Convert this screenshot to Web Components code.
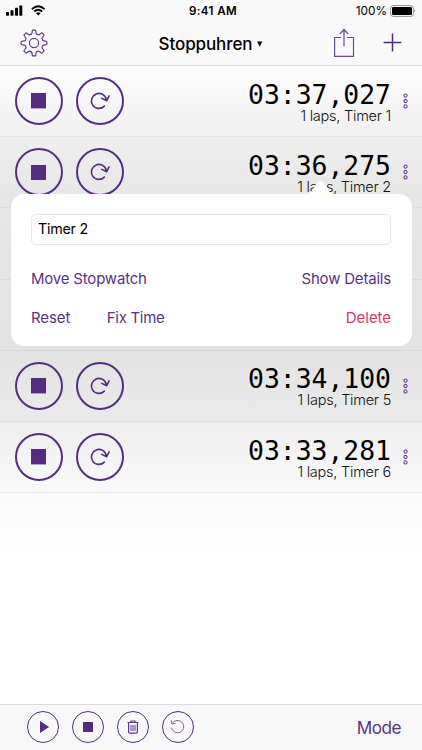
<!DOCTYPE html>
<html lang="de">
<head>
<meta charset="utf-8">
<title>Stoppuhren</title>
<style>
body{margin:0;background:#fff;font-family:Inter,"Liberation Sans",sans-serif;color:#000}
</style>
</head>
<body>
<stopwatch-app></stopwatch-app>
<script>
const define = (name, html, setup) => customElements.define(name, class extends HTMLElement {
  constructor() {
    super();
    this.attachShadow({mode: 'open'});
  }
  connectedCallback() {
    this.shadowRoot.innerHTML = html;
    if (setup) setup(this, this.shadowRoot);
  }
});

const REDO = '<svg width="22" height="20" viewBox="0 0 22 20" fill="none" stroke="#542c80" stroke-width="1.6" stroke-linecap="round" stroke-linejoin="round"><path d="M15.3 15.1A7.5 7.5 0 1 1 17.3 8.8M12.8 7.4L17.7 9.7L20.1 4.9"/></svg>';
const STOP = '<svg width="15.4" height="15.4" viewBox="0 0 15 15"><path fill="#562b82" d="M0 0h15v15H0z"/></svg>';

define('round-button', `
<style>
:host{display:flex;box-sizing:border-box;width:var(--size,48px);height:var(--size,48px);border:var(--ring,2px) solid #552e81;border-radius:50%;align-items:center;justify-content:center;flex:none}
::slotted(svg){display:block}
</style><slot></slot>`);

define('status-bar', `
<style>
:host{display:grid;grid-template-columns:1fr auto 1fr;align-items:center;height:21px;padding:0 6px;font-size:11.8px}
.l{display:flex;gap:8px;align-items:center}
.r{display:flex;gap:3px;align-items:center;justify-content:flex-end}
.t{font-weight:600;font-size:11.6px;letter-spacing:.4px;padding-left:4px;padding-top:1px}
svg{display:block}
</style>
<div class="l">
<svg width="17" height="11" viewBox="0 0 17 11"><rect y="7" width="3" height="3.7" rx=".7"/><rect x="4.5" y="5.2" width="3" height="5.5" rx=".7"/><rect x="9" y="2.8" width="3" height="7.9" rx=".7"/><rect x="13.3" y=".4" width="3" height="10.3" rx=".7"/></svg>
<svg width="15" height="11" viewBox="0 0 15 11" fill="none" stroke="#000" stroke-width="1.9"><path d="M.9 4.1Q7.2-1.7 13.6 4.1M3.2 6.5Q7.2 2.9 11.3 6.5"/><path d="M7.2 10.6L4.9 8.3Q7.2 6.2 9.6 8.3Z" fill="#000" stroke="none"/></svg>
</div>
<span class="t">9:41 AM</span>
<div class="r"><span>100%</span>
<svg width="26" height="12" viewBox="0 0 26 12"><rect x=".6" y=".6" width="22.8" height="10.8" rx="2.6" fill="none" stroke="#929292"/><rect x="2" y="2" width="20" height="8" rx="1.3"/><path d="M24.4 4Q26.1 5.9 24.4 8z" fill="#929292"/></svg></div>`);

define('nav-bar', `
<style>
:host{display:grid;grid-template-columns:1fr auto 1fr;align-items:center;height:44px;padding:0 20px 0 20px}
h1{margin:0;font-size:17px;font-weight:500;display:flex;align-items:center;gap:5px;letter-spacing:-.1px;line-height:22px;padding-top:1px}
.r{display:flex;justify-content:flex-end;align-items:center;gap:28px}
.plus{margin-top:-2px}
svg{display:block}
</style>
<svg class="gear" width="28" height="28" viewBox="-14 -14 28 28" fill="none" stroke="#613a8c" stroke-width="1.15" stroke-linejoin="round"></svg>
<h1><span>Stoppuhren</span><svg width="6" height="6" viewBox="0 0 6 6"><path d="M.2.4h5.2L2.8 5.8z"/></svg></h1>
<div class="r">
<svg width="22" height="30" viewBox="0 0 22 30" fill="none" stroke="#6d4896" stroke-width="1.2"><path d="M8 9.5H1.6V28.4H20.5V9.5H14M11 18.2V1.8M6.7 6.1L11 1.5L15.3 6.1"/></svg>
<svg class="plus" width="19" height="19" viewBox="0 0 19 19" stroke="#552b80" stroke-width="1.5"><path d="M9.5.6V18.4M.6 9.5H18.4"/></svg>
</div>`, (host, root) => {
  let d = '';
  for (let i = 0; i < 8; i++) {
    const base = i * Math.PI / 4 - Math.PI / 2;
    for (const [a, r] of [[-.255, 9.2], [-.2, 10.4], [-.12, 12.9], [.12, 12.9], [.2, 10.4], [.255, 9.2]])
      d += (d ? 'L' : 'M') + (Math.cos(base + a) * r).toFixed(2) + ' ' + (Math.sin(base + a) * r).toFixed(2);
  }
  root.querySelector('.gear').innerHTML = '<path d="' + d + 'Z"/><circle r="4.6"/>';
});

const ROW_BOX = ':host{display:flex;box-sizing:border-box;height:71.2px;padding:0 14px 0 14.5px;align-items:center;border-bottom:1px solid var(--line,#e4e4e4);background:var(--fill)}';

define('covered-row', `<style>${ROW_BOX}</style>`);

define('timer-row', `
<style>
${ROW_BOX}
.b{display:flex;gap:13px}
.i{margin-left:auto;display:flex;flex-direction:column;align-items:flex-end;margin-right:12px}
.time{font-family:"DejaVu Sans Mono","Liberation Mono",monospace;font-size:26.4px;line-height:26px;white-space:pre;padding-top:3px}
.n{font-size:14.5px;line-height:17px;font-weight:300;color:#111;letter-spacing:-.24px;margin-top:-1px}
svg{display:block}
</style>
<div class="b"><round-button>${STOP}</round-button><round-button>${REDO}</round-button></div>
<div class="i"><div class="time"></div><div class="n"><slot></slot></div></div>
<svg width="5" height="16" viewBox="0 0 5 16" fill="none" stroke="#6b4594" stroke-width="1.1"><circle cx="2.5" cy="2.6" r="1.6"/><circle cx="2.5" cy="8" r="1.6"/><circle cx="2.5" cy="13.4" r="1.6"/></svg>`,
(host, root) => { root.querySelector('.time').textContent = host.getAttribute('time'); });

define('timer-popover', `
<style>
:host{display:block;box-sizing:border-box;height:152.6px;background:#fff;border-radius:13px;padding:20px 20.5px}
.arrow{position:absolute;left:296px;top:-13px;display:block}
.f{box-sizing:border-box;height:31px;border:1px solid #e8e8e8;border-radius:5px;padding-left:6px;font-size:14.3px;line-height:28.4px;letter-spacing:-.25px}
.r{display:flex;font-size:15px;line-height:20px;color:#58337f;letter-spacing:-.2px}
.a{margin-top:24px;justify-content:space-between}
.c{margin-top:19px}
.fix{margin-left:36.5px;letter-spacing:-.3px}
.re{letter-spacing:-.1px}
.del{margin-left:auto;color:#dc3574;letter-spacing:-.05px}
</style>
<svg class="arrow" width="27" height="14" viewBox="0 0 27 14"><path fill="#fff" d="M0 13.3C5 12.6 7.5 4.5 10.8 1.2Q13.5-.6 16.2 1.2C19.5 4.5 22 12.6 27 13.3V14H0z"/></svg>
<div class="f">Timer 2</div>
<div class="r a"><span class="mv">Move Stopwatch</span><span class="sd">Show Details</span></div>
<div class="r c"><span class="re">Reset</span><span class="fix">Fix Time</span><span class="del">Delete</span></div>`);

define('tool-bar', `
<style>
:host{display:flex;box-sizing:border-box;height:46px;background:#f8f8f8;border-top:1px solid #dcdcdc;align-items:center;padding:0 21px 1.4px 27px}
.b{display:flex;gap:12.9px;--size:32px;--ring:1.2px}
.m{margin-left:auto;font-size:17.2px;letter-spacing:-.55px;color:#59347f;padding-top:1px}
</style>
<div class="b">
<round-button><svg width="14" height="14" viewBox="0 0 14 14"><path fill="#562b82" d="M4 1L13.1 7L4 13z"/></svg></round-button>
<round-button><svg width="10" height="10"><path fill="#562b82" d="M0 0h10v10H0z"/></svg></round-button>
<round-button><svg width="12" height="14" viewBox="0 0 12 14" fill="none" stroke="#613a8c" stroke-width="1.2"><path d="M.5 2.5H11.5M4 2.5V1H8V2.5M1.6 3V11.8Q1.6 13.2 3 13.2H9Q10.4 13.2 10.4 11.8V3"/><path stroke-width="1" d="M4 5V11M6 5V11M8 5V11"/></svg></round-button>
<round-button><svg width="15" height="15" viewBox="0 0 15 15" fill="none" stroke="#74529a" stroke-width=".9"><path d="M2.2 4.5A6.2 6.2 0 1 1 1.4 8.5M1.3 1.3L1.8 5L5.4 4.3"/></svg></round-button>
</div><span class="m">Mode</span>`);

define('stopwatch-app', `
<style>
:host{display:flex;flex-direction:column;position:relative;width:422px;height:750px;overflow:hidden;background:#fff}
header{height:65px;border-bottom:1px solid #d9d9d9;background:#f9f9f9;box-sizing:content-box;flex:none}
main{flex:1;display:flex;flex-direction:column}
timer-row,covered-row{flex:none}
.rest{flex:1;background:linear-gradient(#fafafa,#fff 70px)}
timer-popover{position:absolute;left:10.5px;top:193.7px;width:401px}
</style>
<header><status-bar></status-bar><nav-bar></nav-bar></header>
<main>
<timer-row time="03:37,027" style="--fill:linear-gradient(#fdfdfd,#f0f0f0)">1 laps, Timer 1</timer-row>
<timer-row time="03:36,275" style="--fill:linear-gradient(#efefef,#e5e5e5);--line:#dcdcdc">1 laps, Timer 2</timer-row>
<covered-row style="--fill:linear-gradient(#e8e8e8,#e4e4e4);--line:#dadada"></covered-row>
<covered-row style="--fill:linear-gradient(#e6e6e6,#e2e2e2);--line:#d8d8d8"></covered-row>
<timer-row time="03:34,100" style="--fill:linear-gradient(#e2e2e2,#ebebeb);--line:#dfdfdf">1 laps, Timer 5</timer-row>
<timer-row time="03:33,281" style="--fill:linear-gradient(#eeeeee,#fafafa);--line:#ebebeb">1 laps, Timer 6</timer-row>
<div class="rest"></div>
</main>
<tool-bar></tool-bar>
<timer-popover></timer-popover>`);
</script>
</body>
</html>
